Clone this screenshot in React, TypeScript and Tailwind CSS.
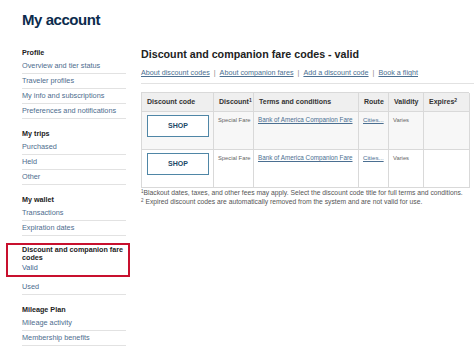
import React from "react";

const font = { fontFamily: '"Liberation Sans", Arial, sans-serif' };

function SideHead({ children }: { children: React.ReactNode }) {
  return (
    <div className="pt-[9px] text-[7.2px] leading-[12px] font-bold text-[#222]">{children}</div>
  );
}

function SideLink({ children }: { children: React.ReactNode }) {
  return (
    <div className="h-[15px] flex items-center border-b border-[#e2e2e2] text-[7.3px] text-[#4d6d8e]">
      {children}
    </div>
  );
}

const links = ["About discount codes", "About companion fares", "Add a discount code", "Book a flight"];

function Row({ shade }: { shade: boolean }) {
  const bg = shade ? "bg-[#f7f7f7]" : "bg-white";
  const cell = `border-r border-b border-[#d9d9d9] ${bg} h-[38px] pt-[4px] px-[4px] leading-[8px] whitespace-nowrap overflow-hidden`;
  return (
    <>
      <div className={`border-r border-b border-[#d9d9d9] ${bg} h-[38px] pt-[3px] pl-[5px]`}>
        <div className="w-[62px] h-[22px] border border-[#4f86a6] bg-white flex items-center justify-center text-[7px] font-bold text-[#1d4a68]">
          SHOP
        </div>
      </div>
      <div className={`${cell} text-[5.8px] text-[#666]`}>Special Fare</div>
      <div className={`${cell} text-[6.3px] text-[#4b6f91]`}>
        <span className="underline">Bank of America Companion Fare</span>
      </div>
      <div className={`${cell} text-[6.2px] text-[#4b6f91]`}>
        <span className="underline">Cities...</span>
      </div>
      <div className={`${cell} text-[5.8px] text-[#666]`}>Varies</div>
      <div className={cell}></div>
    </>
  );
}

export default function App() {
  const head = "border-r border-b border-[#d9d9d9] bg-[#efefef] h-[19px] flex items-center px-[5px] text-[7px] font-bold text-[#333] whitespace-nowrap";
  return (
    <div className="w-[474px] h-[356px] overflow-hidden bg-white" style={font}>
      <div className="pl-[22px] pt-[10px] text-[15px] leading-[19px] font-bold tracking-[-0.45px] text-[#0c2b4d]">
        My account
      </div>
      <div className="mt-[9px] flex pl-[22px] gap-[15px]">
        {/* Sidebar */}
        <div className="w-[104px] shrink-0">
          <SideHead>Profile</SideHead>
          <SideLink>Overview and tier status</SideLink>
          <SideLink>Traveler profiles</SideLink>
          <SideLink>My info and subscriptions</SideLink>
          <SideLink>Preferences and notifications</SideLink>
          <SideHead>My trips</SideHead>
          <SideLink>Purchased</SideLink>
          <SideLink>Held</SideLink>
          <SideLink>Other</SideLink>
          <SideHead>My wallet</SideHead>
          <SideLink>Transactions</SideLink>
          <SideLink>Expiration dates</SideLink>
          <div className="mt-[7px] -ml-[16px] -mr-[4px] pl-[14px] pr-[4px] border-2 border-[#c8102e]">
            <div className="pt-[1px] text-[7.2px] leading-[8px] font-bold text-[#222]">
              Discount and companion fare codes
            </div>
            <div className="h-[13px] flex items-center text-[7.3px] text-[#3f6690]">Valid</div>
          </div>
          <div className="mt-[3px]">
            <SideLink>Used</SideLink>
          </div>
          <SideHead>Mileage Plan</SideHead>
          <SideLink>Mileage activity</SideLink>
          <SideLink>Membership benefits</SideLink>
        </div>

        {/* Main */}
        <div className="flex-1 pt-[10px]">
          <div className="text-[10.7px] leading-[13px] font-bold text-[#222] whitespace-nowrap">
            Discount and companion fare codes - valid
          </div>
          <div className="mt-[7px] pb-[5px] border-b border-[#e2e2e2] text-[7.2px] leading-[10px] text-[#4b6f91] flex items-center whitespace-nowrap">
            {links.map((l, i) => (
              <React.Fragment key={l}>
                {i > 0 && <span className="text-[#888] px-[4px]">|</span>}
                <span className="underline">{l}</span>
              </React.Fragment>
            ))}
          </div>
          <div className="mt-[8px] w-[328px] grid grid-cols-[72px_40px_105px_30px_35px_46px] border-l border-t border-[#d9d9d9]">
            <div className={head}>Discount code</div>
            <div className={head}>
              Discount<sup className="text-[5px]">1</sup>
            </div>
            <div className={head}>Terms and conditions</div>
            <div className={head}>Route</div>
            <div className={head}>Validity</div>
            <div className={head}>
              Expires<sup className="text-[5px]">2</sup>
            </div>
            <Row shade={true} />
            <Row shade={false} />
          </div>
          <div className="text-[6.75px] leading-[9px] text-[#555] whitespace-nowrap">
            <div>
              <sup className="text-[4.5px]">1</sup>Blackout dates, taxes, and other fees may apply. Select the discount code title for full terms and conditions.
            </div>
            <div>
              <sup className="text-[4.5px]">2</sup> Expired discount codes are automatically removed from the system and are not valid for use.
            </div>
          </div>
        </div>
      </div>
    </div>
  );
}
